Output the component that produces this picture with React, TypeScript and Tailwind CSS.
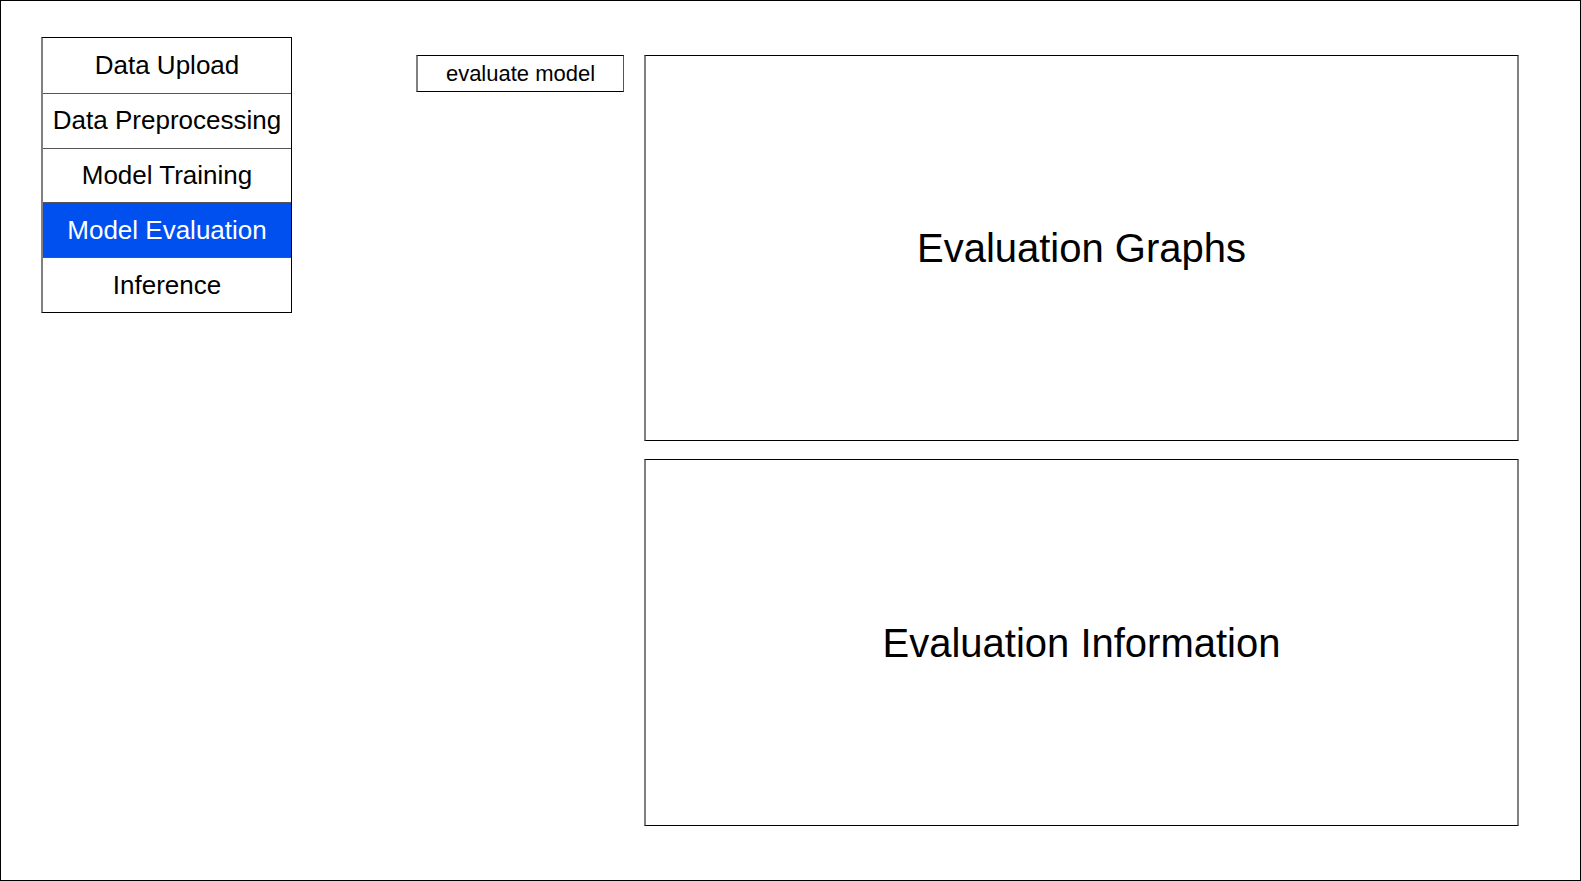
const steps = ['Data Upload', 'Data Preprocessing', 'Model Training', 'Model Evaluation', 'Inference'];

const ACTIVE = 'Model Evaluation';

export default function App() {
  return (
    <div
      className="w-[1581px] h-[881px] border border-black bg-white text-black flex items-start pl-[40px] pt-[36px]"
      style={{ fontFamily: '"Liberation Sans", Arial, sans-serif' }}
    >
      <nav className="w-[251px] flex flex-col border-y border-black border-l-2 border-l-[#808080] border-r border-r-black">
        {steps.map((step, i) => (
          <div
            key={step}
            className={
              (i > 0 ? 'border-t border-[#555] ' : '') +
              (step === ACTIVE ? 'bg-[#0050ef] text-white ' : 'bg-white ') +
              'h-[54.8px] flex items-center justify-center text-[26px] leading-none pb-[1px]'
            }
          >
            {step}
          </div>
        ))}
      </nav>

      <button
        type="button"
        className="ml-[124px] mt-[18px] w-[208px] h-[37px] border-y border-black border-l-2 border-l-[#808080] border-r border-r-[#555] bg-white text-[22px] leading-none flex items-center justify-center"
      >
        evaluate model
      </button>

      <div className="ml-[20px] mt-[18px] w-[875px] flex flex-col gap-[18px]">
        <section className="h-[386px] border-y border-black border-x-2 border-x-[#808080] flex items-center justify-center">
          <h2 className="text-[40px] leading-none">Evaluation Graphs</h2>
        </section>
        <section className="h-[367px] border-y border-black border-x-2 border-x-[#808080] flex items-center justify-center">
          <h2 className="text-[40px] leading-none">Evaluation Information</h2>
        </section>
      </div>
    </div>
  );
}
